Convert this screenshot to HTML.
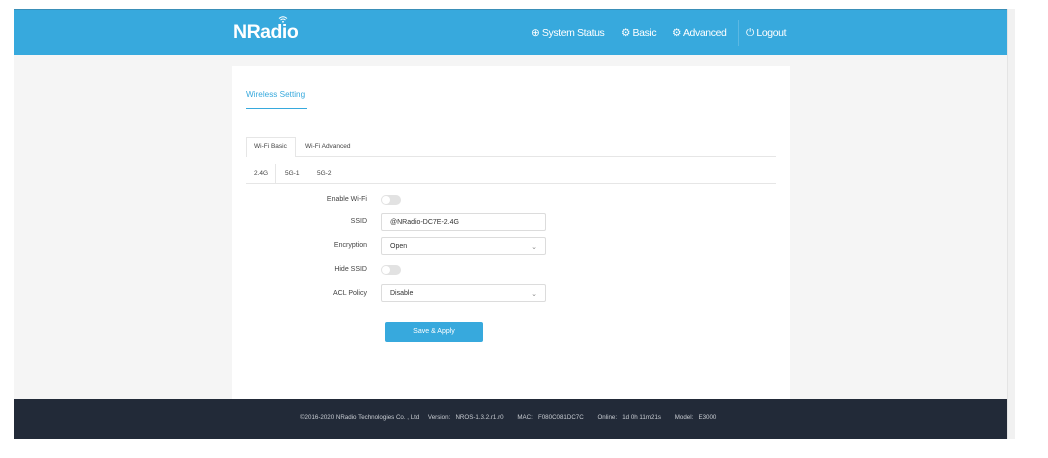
<!DOCTYPE html>
<html><head><meta charset="utf-8"><style>
*{margin:0;padding:0;box-sizing:border-box}
body{width:1048px;height:458px;background:#fff;font-family:"Liberation Sans",sans-serif;position:relative;overflow:hidden}
.abs{position:absolute}
#hdr{left:14px;top:9px;width:993px;height:46px;background:#37a9dd;border-top:1px solid #3a8fb8}
#bg{left:14px;top:55px;width:993px;height:344px;background:#f5f5f5}
#sb{left:1007px;top:9px;width:8px;height:430px;background:#f1f1f1;border-left:1px solid #e4e4e4}
#card{left:232px;top:66px;width:558px;height:333px;background:#fff}
#ft{left:14px;top:399px;width:993px;height:40px;background:#222a38;color:#c8ccd2;font-size:6.2px}
.nav{color:#fff;font-size:10.5px;top:27px;letter-spacing:-0.4px}
.lbl{font-size:7px;color:#444;text-align:right;width:100px;left:267px}
.tog{left:381px;width:20px;height:10px;border-radius:5px;background:#e2e2e2}
.tog:after{content:"";position:absolute;left:1px;top:1px;width:8px;height:8px;border-radius:50%;background:#fff}
.inp{left:381px;width:165px;height:18px;border:1px solid #dcdcdc;border-radius:2px;font-size:7px;color:#333;padding:5px 8px}
.t{font-size:6.5px;color:#444}
</style></head><body>
<div id="hdr" class="abs"></div>
<div id="bg" class="abs"></div>
<div id="sb" class="abs"></div>
<div class="abs" style="left:233px;top:21px;color:#fff;font-weight:bold;font-size:19.5px;letter-spacing:-0.5px">NRadio</div>
<svg class="abs" style="left:278px;top:15px" width="10" height="8" viewBox="0 0 10 8"><path d="M1 3.5Q5 0 9 3.5M2.5 5Q5 3 7.5 5" stroke="#fff" stroke-width="1" fill="none"/><circle cx="5" cy="6.8" r="0.9" fill="#fff"/></svg>
<div class="abs nav" style="left:531px">⊕ System Status</div>
<div class="abs nav" style="left:621px">⚙ Basic</div>
<div class="abs nav" style="left:672px">⚙ Advanced</div>
<div class="abs" style="left:738px;top:20px;width:1px;height:26px;background:#5bb8e3"></div>
<div class="abs nav" style="left:746px">⏻ Logout</div>
<div id="card" class="abs"></div>
<div class="abs" style="left:246px;top:90px;font-size:8.2px;color:#37a9dd">Wireless Setting</div>
<div class="abs" style="left:246px;top:108px;width:61px;height:1px;background:#37a9dd"></div>
<div class="abs" style="left:246px;top:156px;width:530px;height:1px;background:#e6e6e6"></div>
<div class="abs" style="left:246px;top:137px;width:50px;height:20px;border:1px solid #e6e6e6;border-bottom:none;background:#fff"></div>
<div class="abs t" style="left:254px;top:143px">Wi-Fi Basic</div>
<div class="abs t" style="left:305px;top:143px">Wi-Fi Advanced</div>
<div class="abs" style="left:246px;top:183px;width:530px;height:1px;background:#e6e6e6"></div>
<div class="abs" style="left:275px;top:164px;width:1px;height:20px;background:#e6e6e6"></div>
<div class="abs t" style="left:254px;top:170px">2.4G</div>
<div class="abs t" style="left:285px;top:170px">5G-1</div>
<div class="abs t" style="left:317px;top:170px">5G-2</div>
<div class="abs lbl" style="top:196px">Enable Wi-Fi</div>
<div class="abs tog" style="top:195px"></div>
<div class="abs lbl" style="top:218px">SSID</div>
<div class="abs inp" style="top:213px">@NRadio-DC7E-2.4G</div>
<div class="abs lbl" style="top:242px">Encryption</div>
<div class="abs inp" style="top:237px">Open<span style="float:right;color:#888">⌄</span></div>
<div class="abs lbl" style="top:266px">Hide SSID</div>
<div class="abs tog" style="top:265px"></div>
<div class="abs lbl" style="top:290px">ACL Policy</div>
<div class="abs inp" style="top:284px">Disable<span style="float:right;color:#888">⌄</span></div>
<div class="abs" style="left:385px;top:322px;width:98px;height:20px;background:#37a9dd;border-radius:2px;color:#fff;font-size:7px;text-align:center;line-height:20px">Save &amp; Apply</div>
<div id="ft" class="abs"><div style="position:absolute;left:286px;top:15px;white-space:pre">©2016-2020 NRadio Technologies Co. , Ltd     Version:   NROS-1.3.2.r1.r0        MAC:   F080C081DC7C        Online:   1d 0h 11m21s        Model:   E3000</div></div>
</body></html>
